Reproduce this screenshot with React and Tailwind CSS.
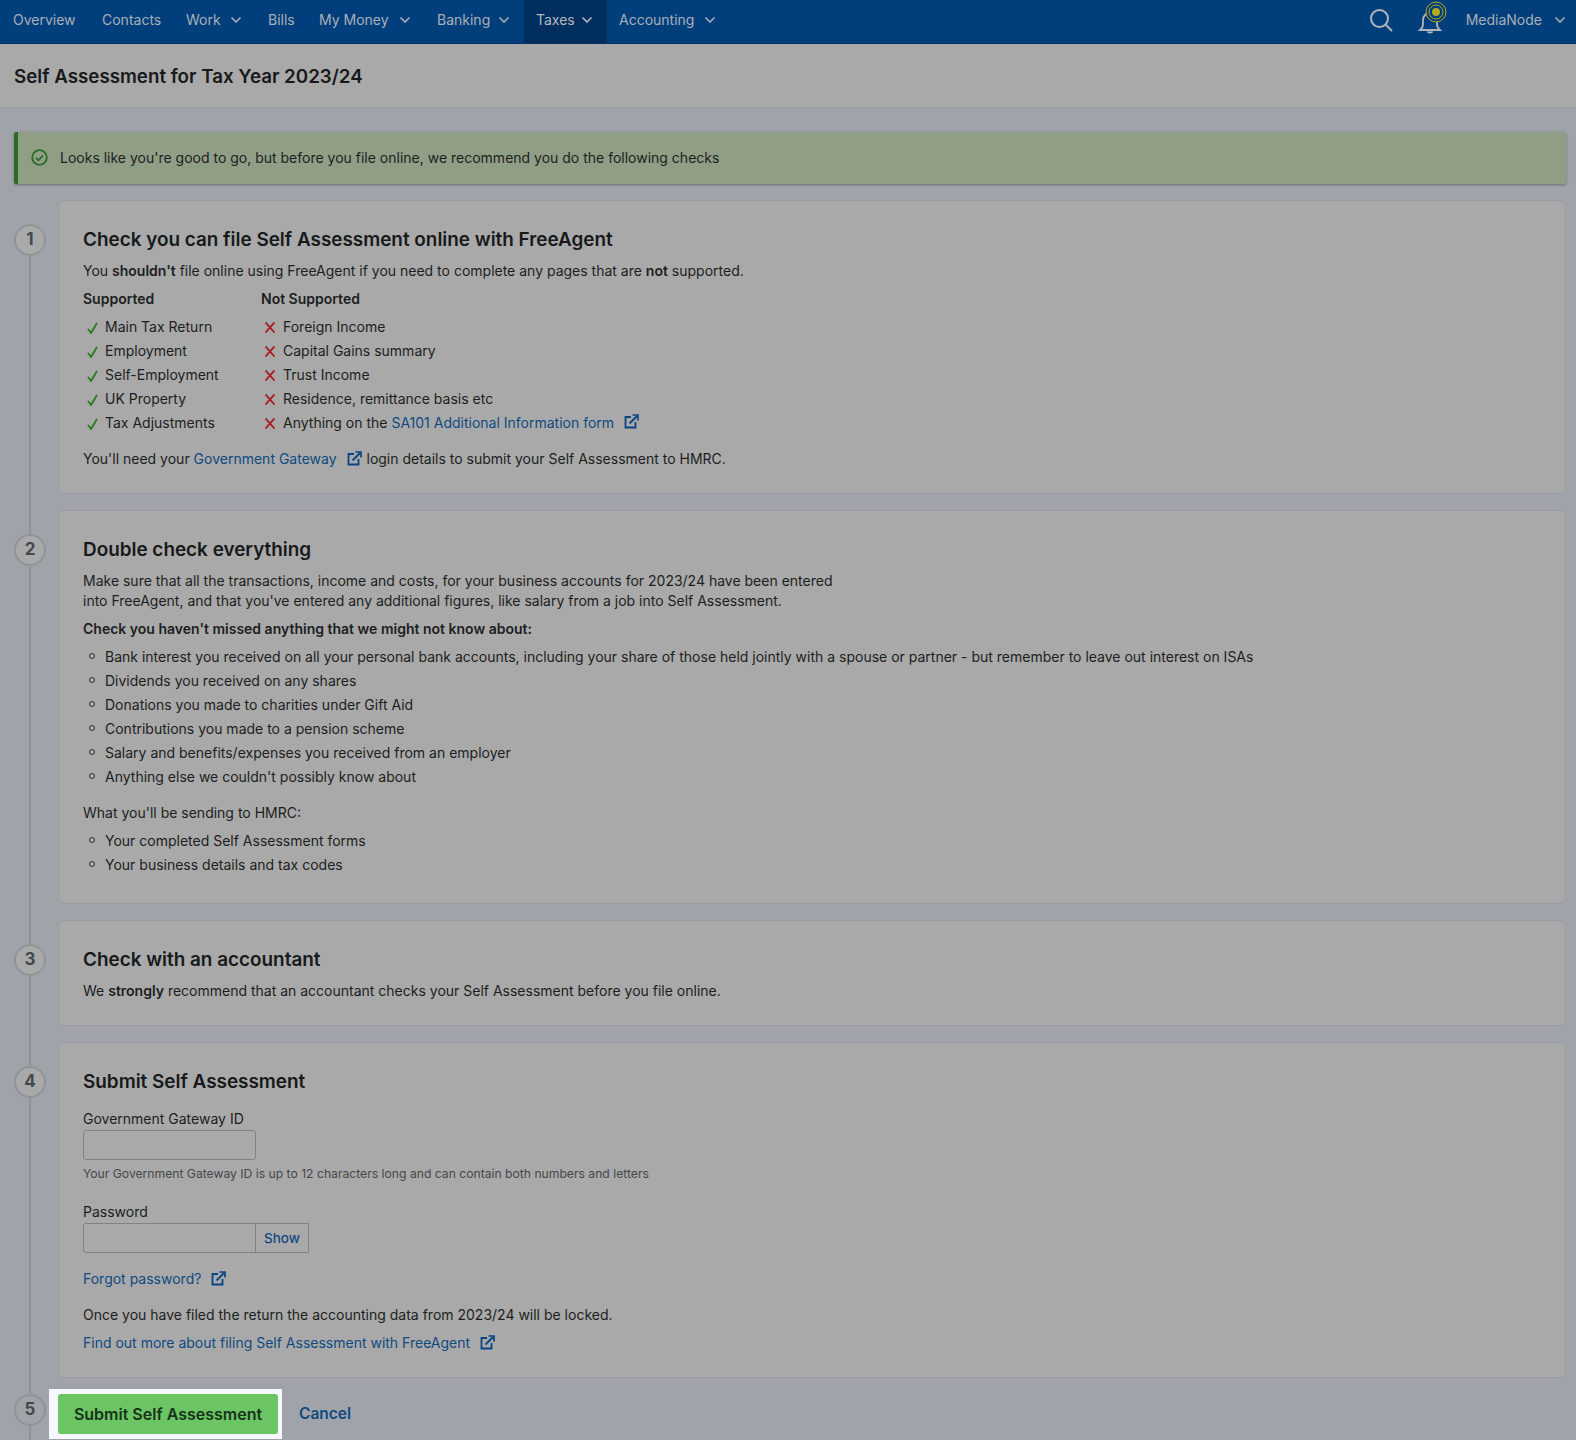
import React from "react";
import { ChevronDown } from "lucide-react";

const NAV = [
  { label: "Overview", width: "w-[89px]" },
  { label: "Contacts", width: "w-[84px]" },
  { label: "Work", menu: true, width: "w-[82px]" },
  { label: "Bills", width: "w-[51px]" },
  { label: "My Money", menu: true, width: "w-[118px]" },
  { label: "Banking", menu: true, width: "w-[99px]" },
  { label: "Taxes", menu: true, active: true, width: "w-[83px]" },
  { label: "Accounting", menu: true, width: "w-[123px]" },
];

const SUPPORTED = ["Main Tax Return", "Employment", "Self-Employment", "UK Property", "Tax Adjustments"];
const NOT_SUPPORTED = ["Foreign Income", "Capital Gains summary", "Trust Income", "Residence, remittance basis etc"];
const MISSED = [
  "Bank interest you received on all your personal bank accounts, including your share of those held jointly with a spouse or partner - but remember to leave out interest on ISAs",
  "Dividends you received on any shares",
  "Donations you made to charities under Gift Aid",
  "Contributions you made to a pension scheme",
  "Salary and benefits/expenses you received from an employer",
  "Anything else we couldn't possibly know about",
];
const SENDING = ["Your completed Self Assessment forms", "Your business details and tax codes"];

const ExtIcon = () => (
  <svg className="inline-block ml-[10px] mr-[1px] -mt-[4px]" width="15" height="15" viewBox="0 0 15 15" fill="none" stroke="#0b4484" strokeWidth="1.8">
    <path d="M7 3H1.5v10.500H11.500V8" />
    <path d="M5.500 9.500 13 2" />
    <path d="M8.500 1h5.500v5.500" strokeWidth="1.700" />
  </svg>
);

const Ext = ({ children }) => (
  <a className="text-[#0f4a80]">
    {children}
    <ExtIcon />
  </a>
);

const Tick = () => (
  <svg className="ml-[4px] mr-[7px] mt-[3px] shrink-0" width="11" height="12" viewBox="0 0 11 12" fill="none" stroke="#2f7a28" strokeWidth="1.900">
    <path d="M1 7l3 4L10 1" />
  </svg>
);

const Cross = () => (
  <svg className="ml-[4px] mr-[8px] mt-[3px] shrink-0" width="10" height="11" viewBox="0 0 10 11" fill="none" stroke="#a81e1e" strokeWidth="1.900">
    <path d="M0.500 0.500l9 10M9.500 0.500l-9 10" />
  </svg>
);

const Bullets = ({ items }) => (
  <ul className="flex flex-col">
    {items.map((item) => (
      <li key={item} className="h-6 flex items-center pl-[6px]">
        <span className="w-[6px] h-[6px] rounded-full border border-[#2a2c2e] mr-[10px]" />
        {item}
      </li>
    ))}
  </ul>
);

// numbered circle on the left rail plus its card
const Step = ({ n, children, className }) => (
  <div className={"relative flex pl-[58px] pr-[10px] " + className}>
    <div className="absolute left-[14px] top-[24px] w-[32px] h-[32px] rounded-full bg-[#a9a9a9] border-2 border-[#8f9499] flex items-center justify-center font-bold text-[17px] text-[#44484c] z-10">
      {n}
    </div>
    <div className="flex-1 bg-[#a9a9a9] border border-[#999da2] rounded-[6px] pl-[24px] pr-6 pt-[25px]">{children}</div>
  </div>
);

const Title = ({ children }) => <h2 className="text-[18.900px] leading-7 font-semibold text-[#17191b]">{children}</h2>;

export default function App() {
  return (
    <div className="relative h-[1440px] overflow-hidden bg-[#a0a4aa] text-[14px] text-[#1c1e20] font-['Inter',sans-serif]">
      <nav className="h-11 bg-[#003e7c] flex items-stretch text-[#a9b0b8] border-b border-[#00325f]">
        <div className="flex pl-[1px]">
          {NAV.map((item) => (
            <div key={item.label} className={"flex items-center justify-between px-3 pb-[4px] " + item.width + " " + (item.active ? "bg-[#002e5e] text-[#b4b9be]" : "")}>
              {item.label}
              {item.menu && <ChevronDown className="w-4 h-4" strokeWidth={2.5} />}
            </div>
          ))}
        </div>
        <div className="ml-auto flex items-center pr-2 pb-[4px]">
          <svg className="mr-[25px]" width="24" height="24" viewBox="0 0 24 24" fill="none" stroke="#b0b4b8" strokeWidth="2">
            <circle cx="10.500" cy="10.500" r="8.500" />
            <path d="M17 17l6 6" />
          </svg>
          <div className="relative mr-[24px] mt-[5px]">
            <svg width="24" height="24" viewBox="0 0 24 24" fill="none" stroke="#b0b4b8" strokeWidth="1.800">
              <path d="M2 20c2-1.500 3-3 3-6V10c0-4 3-7 7-7s7 3 7 7v4c0 3 1 4.500 3 6z" />
              <path d="M9.500 21.500c.5 1.300 4.500 1.300 5 0" />
            </svg>
            <svg className="absolute -top-[9px] left-[7px]" width="22" height="22" viewBox="0 0 22 22">
              <circle cx="11" cy="11" r="10" fill="#003e7c" stroke="#b5a91f" strokeWidth="1" />
              <circle cx="11" cy="11" r="7" fill="none" stroke="#b5a91f" strokeWidth="1" />
              <circle cx="11" cy="11" r="4" fill="#b5a91f" />
            </svg>
          </div>
          <span>MediaNode</span>
          <ChevronDown className="w-4 h-4 ml-[10px]" strokeWidth={2.5} />
        </div>
      </nav>

      <header className="h-[64px] bg-[#a9a9a9] border-b border-[#999da2] flex items-center pl-[14px] pt-[4px]">
        <h1 className="text-[18.750px] font-semibold text-[#17191b]">Self Assessment for Tax Year 2023/24</h1>
      </header>

      <div className="mt-6 ml-[14px] mr-[10px] h-[52px] bg-[#909e86] border-l-[4px] border-[#2c6a26] rounded-[2px] shadow-[0_1px_3px_rgba(0,0,0,0.35)] flex items-center pl-[13px] pb-[2px]">
        <svg className="mr-[12px]" width="17" height="17" viewBox="0 0 17 17" fill="none" stroke="#2c6a26" strokeWidth="1.800">
          <circle cx="8.500" cy="8.500" r="7.300" />
          <path d="M5 8.800l2.500 2.500 4.500-5" />
        </svg>
        Looks like you're good to go, but before you file online, we recommend you do the following checks
      </div>

      <div className="relative">
        <div className="absolute left-[29px] top-[40px] w-[2px] h-[1200px] bg-[#8f9499]" />

        <Step n={1} className="mt-4 h-[294px]">
          <Title>Check you can file Self Assessment online with FreeAgent</Title>
          <p className="mt-[7px] leading-5">
            You <b className="font-semibold">shouldn't</b> file online using FreeAgent if you need to complete any pages that are <b className="font-semibold">not</b> supported.
          </p>
          <div className="flex mt-2">
            <div className="w-[178px]">
              <div className="font-semibold leading-5 mb-[5px]">Supported</div>
              {SUPPORTED.map((s) => (
                <div key={s} className="h-6 flex items-center">
                  <Tick />
                  {s}
                </div>
              ))}
            </div>
            <div>
              <div className="font-semibold leading-5 mb-[5px]">Not Supported</div>
              {NOT_SUPPORTED.map((s) => (
                <div key={s} className="h-6 flex items-center">
                  <Cross />
                  {s}
                </div>
              ))}
              <div className="h-6 flex items-center">
                <Cross />
                <span className="whitespace-pre">Anything on the </span>
                <Ext>SA101 Additional Information form</Ext>
              </div>
            </div>
          </div>
          <p className="mt-[13px] leading-6">
            You'll need your <Ext>Government Gateway</Ext> login details to submit your Self Assessment to HMRC.
          </p>
        </Step>

        <Step n={2} className="mt-[16px] h-[394px]">
          <Title>Double check everything</Title>
          <p className="mt-[7px] leading-5">
            Make sure that all the transactions, income and costs, for your business accounts for 2023/24 have been entered
            <br />
            into FreeAgent, and that you've entered any additional figures, like salary from a job into Self Assessment.
          </p>
          <p className="mt-2 leading-5 font-semibold">Check you haven't missed anything that we might not know about:</p>
          <div className="mt-[5px]">
            <Bullets items={MISSED} />
          </div>
          <p className="mt-[13px] leading-6">What you'll be sending to HMRC:</p>
          <div className="mt-[3px]">
            <Bullets items={SENDING} />
          </div>
        </Step>

        <Step n={3} className="mt-[16px] h-[106px]">
          <Title>Check with an accountant</Title>
          <p className="mt-[7px] leading-5">
            We <b className="font-semibold">strongly</b> recommend that an accountant checks your Self Assessment before you file online.
          </p>
        </Step>

        <Step n={4} className="mt-[16px] h-[336px]">
          <Title>Submit Self Assessment</Title>
          <label className="block mt-[13px] leading-5">Government Gateway ID</label>
          <input className="block mt-px w-[173px] h-[30px] border border-[#7f8387] rounded-[3px] bg-[#a9a9a9]" />
          <p className="mt-[6px] text-[12.170px] leading-4 text-[#45484b]">Your Government Gateway ID is up to 12 characters long and can contain both numbers and letters</p>
          <label className="block mt-[20px] leading-5">Password</label>
          <div className="flex mt-px">
            <input className="w-[173px] h-[30px] border border-[#7f8387] rounded-l-[3px] bg-[#a9a9a9]" />
            <span className="h-[30px] w-[54px] -ml-px border border-[#7f8387] flex items-center justify-center text-[13.500px] font-medium text-[#0f4a80]">Show</span>
          </div>
          <p className="mt-[16px] leading-5"><Ext>Forgot password?</Ext></p>
          <p className="mt-4 leading-5">Once you have filed the return the accounting data from 2023/24 will be locked.</p>
          <p className="mt-2 leading-5"><Ext>Find out more about filing Self Assessment with FreeAgent</Ext></p>
        </Step>

        <div className="relative flex items-center pl-[49px] mt-[11px]">
          <div className="absolute left-[14px] top-[5px] w-[32px] h-[32px] rounded-full bg-[#a0a4aa] border-2 border-[#8f9499] flex items-center justify-center font-bold text-[17px] text-[#44484c] z-10">
            5
          </div>
          <div className="bg-[#f5f8ff] pl-[9px] pr-[4px] pt-[5px] pb-[5px]">
            <button className="w-[220px] h-10 rounded-[3px] bg-[#6cc565] text-[16px] font-semibold text-[#17331a]">Submit Self Assessment</button>
          </div>
          <a className="ml-[17px] text-[15.500px] font-semibold text-[#0f4a80]">Cancel</a>
        </div>
      </div>
    </div>
  );
}
